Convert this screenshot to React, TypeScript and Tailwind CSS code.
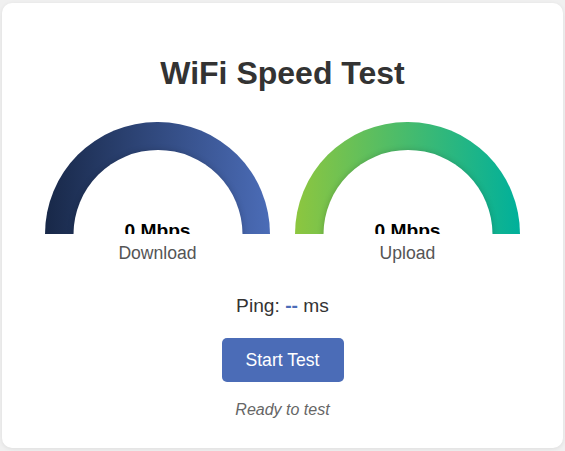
import React from "react";

function Gauge({ from, to, label }: { from: string; to: string; label: string }) {
  return (
    <div className="flex flex-col items-center w-[225px]">
      <div
        className="relative w-[225px] h-[112px] overflow-hidden rounded-t-[112.5px]"
        style={{ background: `linear-gradient(to right, ${from}, ${to})` }}
      >
        <div className="absolute left-1/2 top-[28px] -translate-x-1/2 w-[169px] h-[169px] rounded-full bg-white shadow-[0_0_6px_rgba(0,0,0,0.18)]" />
        <div className="absolute left-0 right-0 top-[98px] text-center font-bold text-[19.2px] leading-[22px] text-black">
          0 Mbps
        </div>
      </div>
      <div className="mt-[9px] text-[17.6px] leading-[20px] text-[#555]">{label}</div>
    </div>
  );
}

export default function App() {
  return (
    <div className="min-h-[451px] bg-[#f0f0f0] pt-[3px] px-[2px]" style={{ fontFamily: '"Liberation Sans", Arial, sans-serif' }}>
      <div className="h-[445px] rounded-[10px] bg-white shadow-[0_1px_4px_rgba(0,0,0,0.08)] flex flex-col items-center">
        <h1 className="mt-[52px] text-[32px] leading-[37px] font-bold text-[#333]">WiFi Speed Test</h1>
        <div className="mt-[30px] flex justify-center gap-[25px]">
          <Gauge from="#182848" to="#4b6cb7" label="Download" />
          <Gauge from="#8dc63f" to="#00b09b" label="Upload" />
        </div>
        <div className="mt-[32px] text-[19.2px] leading-[22px] text-[#333]">
          Ping: <span className="font-bold text-[#4b6cb7]">--</span> ms
        </div>
        <button className="mt-[21px] h-[44px] px-[24px] rounded-[5px] bg-[#4b6cb7] text-white text-[17.6px]">
          Start Test
        </button>
        <div className="mt-[19px] italic text-[16px] leading-[18px] text-[#666]">Ready to test</div>
      </div>
    </div>
  );
}
